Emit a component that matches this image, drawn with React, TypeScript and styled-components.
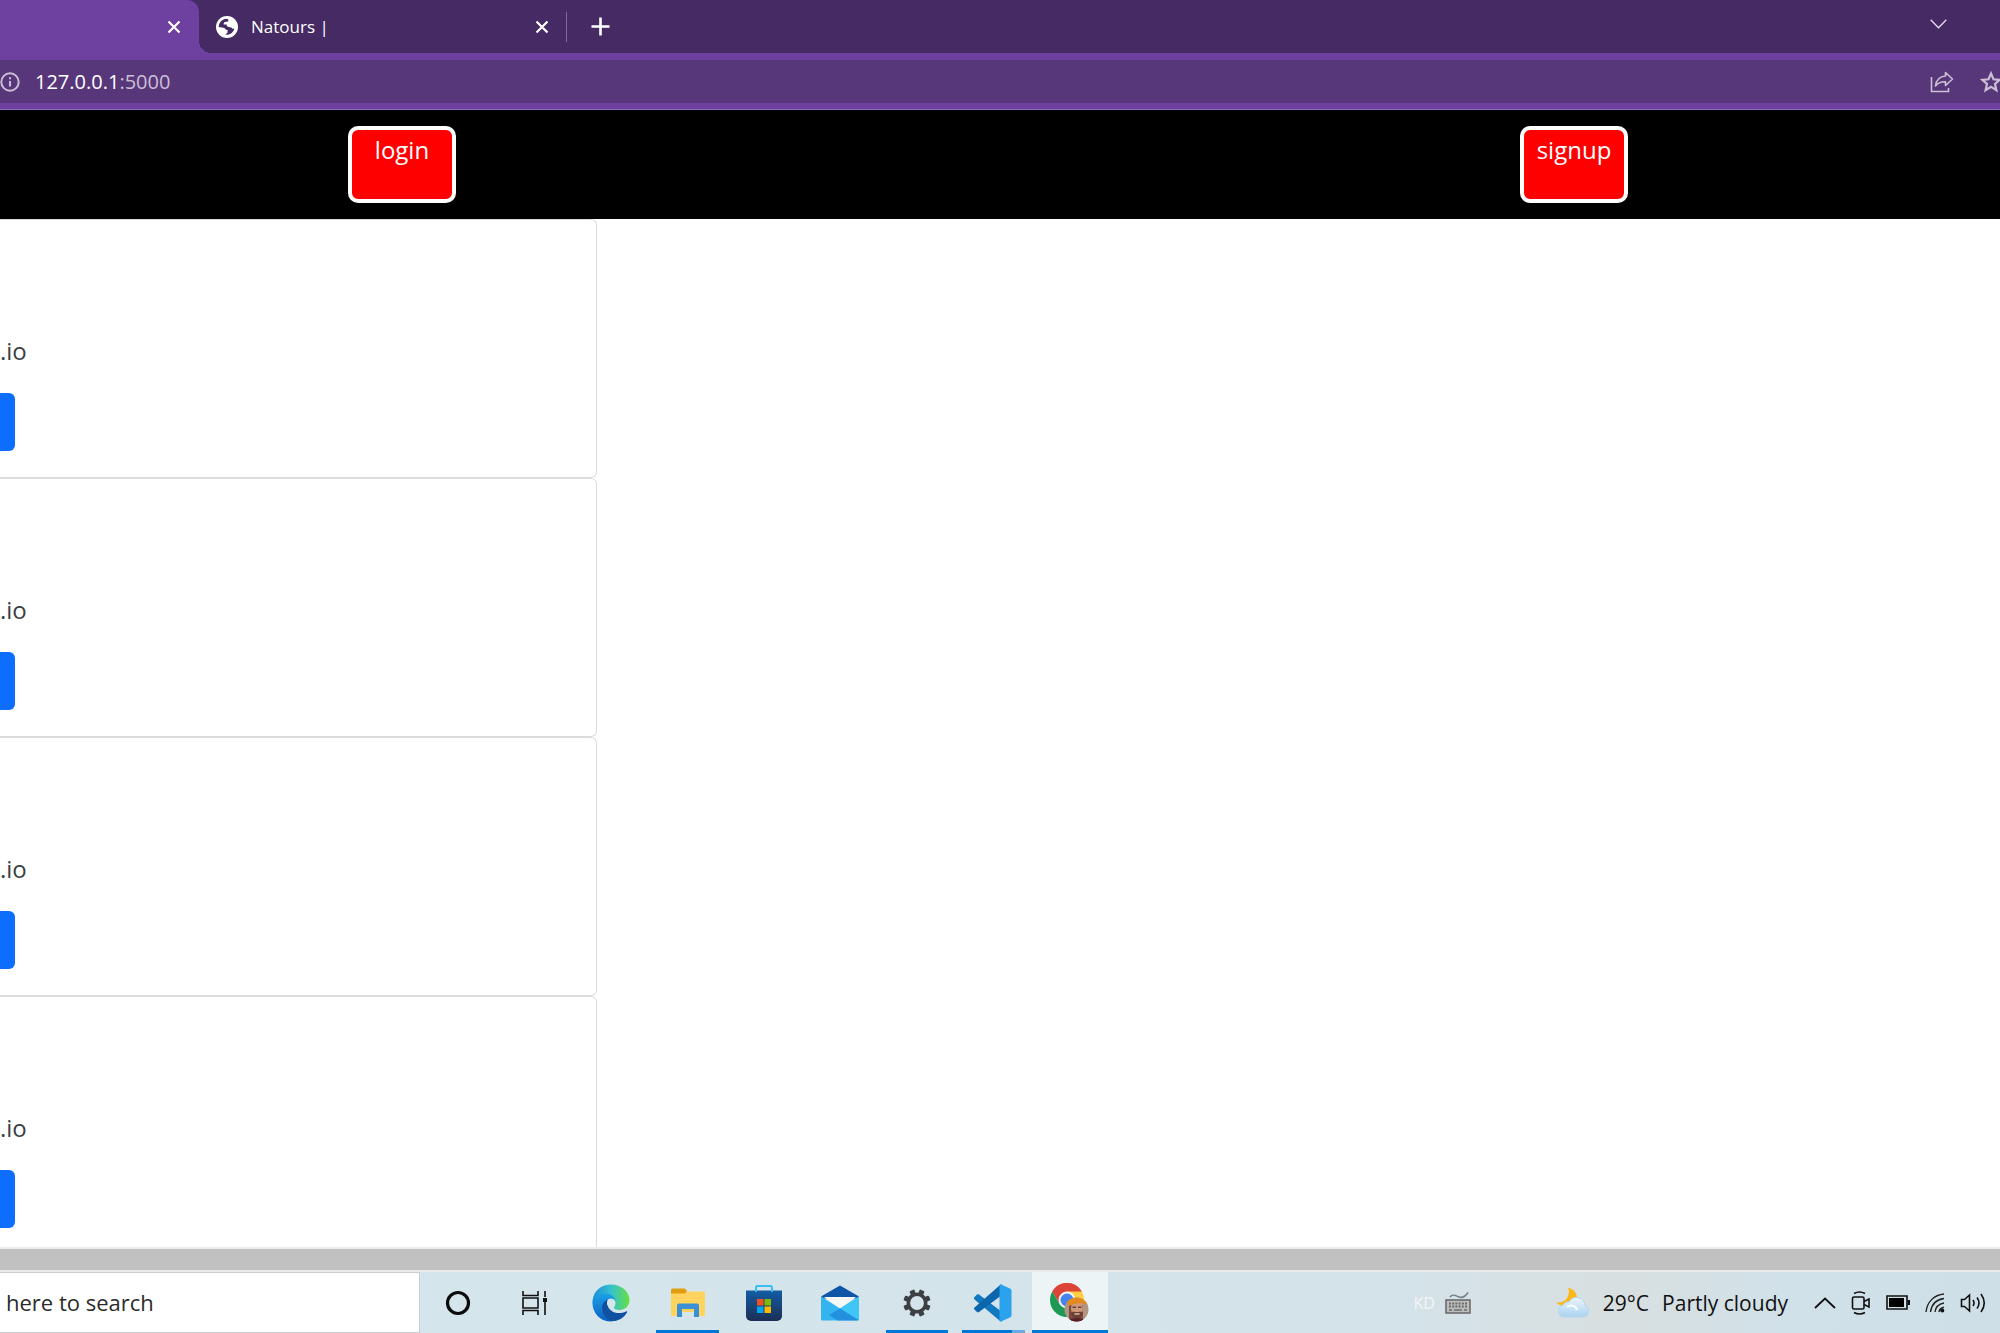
import React from "react";
import styled, { createGlobalStyle, css } from "styled-components";

const GlobalStyle = createGlobalStyle`
  *, *::before, *::after { box-sizing: border-box; }
  body {
    margin: 0;
    background: #fff;
    font-family: "Open Sans", "Noto Sans", sans-serif;
  }
  button, input { font-family: inherit; }
  svg { display: block; flex: none; }
`;

const Screen = styled.div`
  display: flex;
  flex-direction: column;
  height: 100vh;
  overflow: hidden;
`;

const IconButton = styled.button`
  display: flex;
  align-items: center;
  justify-content: center;
  padding: 0;
  border: 0;
  background: none;
  color: inherit;
`;

/* ---------- browser chrome ---------- */

const TabStrip = styled.header`
  display: flex;
  flex: none;
  height: 53px;
  background: #462a64;
  color: #fff;
`;

const Tab = styled.div<{ $active?: boolean }>`
  position: relative;
  display: flex;
  align-items: center;
  justify-content: ${(p) => (p.$active ? "flex-end" : "flex-start")};
  width: ${(p) => (p.$active ? 199 : 368)}px;
  padding: 0 18px 0 17px;
  font-size: 17px;

  ${(p) =>
    p.$active &&
    css`
      background: #6e41a1;
      border-radius: 0 12px 0 0;
      &::after {
        content: "";
        position: absolute;
        left: 100%;
        bottom: 0;
        width: 12px;
        height: 12px;
        background: radial-gradient(circle at 100% 0, transparent 12px, #6e41a1 12px);
      }
    `}
  ${(p) =>
    !p.$active &&
    css`
      &::after {
        content: "";
        position: absolute;
        right: 0;
        top: 12px;
        height: 30px;
        border-right: 1px solid #7f6a95;
      }
    `}
`;

const TabTitle = styled.span`
  flex: 1;
  margin-left: 13px;
`;

const NewTab = styled(IconButton)`
  width: 67px;
`;

const TabMenu = styled(IconButton)`
  width: 50px;
  margin: 0 37px 6px auto;
`;

const Toolbar = styled.div`
  flex: none;
  padding: 7px 0 6px;
  background: #6e41a1;
  border-bottom: 1px solid #8c6bb0;
`;

const AddressBar = styled.div`
  display: flex;
  align-items: center;
  height: 43px;
  background: #57377a;
  color: #cbbfd6;
  overflow: hidden;
`;

const Url = styled.span`
  flex: 1;
  margin-left: 15px;
  font-size: 20px;
  b {
    font-weight: 400;
    color: #fff;
  }
`;

const StarButton = styled(IconButton)`
  margin: 0 -2px 0 26px;
`;

/* ---------- page ---------- */

const NavBar = styled.nav`
  display: flex;
  flex: none;
  justify-content: space-between;
  padding: 16px 18.6% 16px 17.4%;
  background: #000;
`;

const NavButton = styled.button`
  display: flex;
  align-items: flex-start;
  justify-content: center;
  width: 108px;
  height: 77px;
  padding: 4px 0 0;
  border: 4px solid #fff;
  border-radius: 10px;
  background: #f00;
  color: #fff;
  font-size: 24px;
  line-height: 31px;
`;

const Page = styled.main`
  flex: 1;
  min-height: 0;
  overflow: hidden;
  background: #fff;
`;

const Card = styled.article`
  width: 597px;
  height: 259px;
  padding: 115px 0 0;
  border: solid #dcdcdc;
  border-width: 1px 1px 1px 0;
  border-radius: 0 6px 6px 0;
`;

const CardText = styled.p`
  margin: 0 0 26px;
  color: #3a3f44;
  font-size: 24px;
  line-height: 32px;
`;

const CardButton = styled.button`
  display: block;
  width: 15px;
  height: 58px;
  padding: 0;
  border: 0;
  border-radius: 0 6px 6px 0;
  background: #0d6efd;
`;

const ScrollTrack = styled.div`
  flex: none;
  height: 25px;
  border: solid #ececec;
  border-width: 2px 0;
  background: #c1c1c1;
`;

/* ---------- taskbar ---------- */

const Taskbar = styled.footer`
  display: flex;
  flex: none;
  height: 61px;
  background: linear-gradient(90deg, #d5e5ec 21%, #d4e3ea 70%, #d8dfe0 81%, #d1e1e9 89%, #cfdfe8 100%);
`;

const SearchBox = styled.input`
  width: 420px;
  padding: 0 0 1px 6px;
  border: 1px solid #c9ced1;
  border-left: 0;
  background: #fff;
  color: #2b2b2b;
  font-size: 22px;
  outline: 0;
  &::placeholder {
    color: #2b2b2b;
    opacity: 1;
  }
`;

const Apps = styled.div`
  display: flex;
  width: 688px;
`;

const AppButton = styled(IconButton)<{ $open?: boolean; $active?: boolean; $stacked?: boolean }>`
  position: relative;
  flex: 1;
  ${(p) => p.$active && "background: #edf4f6;"}
  ${(p) =>
    (p.$open || p.$active) &&
    css`
      &::after {
        content: "";
        position: absolute;
        left: ${p.$active ? 0 : 7}px;
        right: ${p.$active ? 0 : 7}px;
        bottom: 0;
        height: 3px;
        background: ${p.$stacked ? "linear-gradient(90deg, #0078d7 80%, #69a9e4 80%)" : "#0078d7"};
      }
    `}
`;

const Tray = styled.div`
  display: flex;
  align-items: center;
  margin-left: auto;
  padding-right: 14px;
  color: #111;
`;

const Layout = styled.span`
  margin-right: 10px;
  color: #f4f6f5;
  font-size: 16px;
`;

const Weather = styled.button`
  display: flex;
  align-items: center;
  gap: 13px;
  margin: 0 26px 0 84px;
  padding: 0;
  border: 0;
  background: none;
  color: #111;
  font-size: 21px;
`;

const TrayIcons = styled.div`
  display: flex;
  align-items: center;
  gap: 15px;
`;

/* ---------- icons ---------- */

const CloseIcon = () => (
  <svg width="14" height="14" viewBox="0 0 14 14" fill="none" stroke="#fff" strokeWidth="2.2">
    <path d="M1.5 1.5l11 11M12.5 1.5l-11 11" />
  </svg>
);

const GlobeIcon = () => (
  <svg width="22" height="22" viewBox="0 0 24 24">
    <circle cx="12" cy="12" r="12" fill="#fff" />
    <path
      d="M10.300 3C6 4 3 7.800 3 12l5 .7c1.500.2 2.200 1 2.400 2.100l2.300.4-.3 3.300-2.500 1.800c5.500.8 9-2.500 10.200-6.500-1.500.4-2.600-.1-3.300-1.300l-3.100-.5c-1.700-.3-2.300-1.300-2-2.600H8.300c-.2-2 .7-3 2.600-3.100l2.500-.2V3.500z"
      fill="#462a64"
    />
  </svg>
);

const InfoIcon = () => (
  <svg width="20" height="20" viewBox="0 0 20 20" fill="none" stroke="currentColor" strokeWidth="2">
    <circle cx="10" cy="10" r="8.700" />
    <path d="M10 9v5.500M10 5.300v2" />
  </svg>
);

const ShareIcon = () => (
  <svg width="24" height="22" viewBox="0 0 24 22" fill="none" stroke="currentColor" strokeWidth="1.600">
    <path d="M1.500 6v14.500h17V17" />
    <path d="M15.500 1.500l7 6.500-7 6.500v-3.800c-4.500-.2-7.500 1-10 4.300.6-5.500 4-9.500 10-10z" strokeLinejoin="round" />
  </svg>
);

const StarIcon = () => (
  <svg width="22" height="22" viewBox="0 0 22 22" fill="none" stroke="currentColor" strokeWidth="2.200">
    <path d="M11 2.500l2.500 5.800 6.200.6-4.700 4.100 1.400 6.200-5.400-3.300-5.400 3.300L7 13 2.300 8.900l6.200-.6z" />
  </svg>
);

const TaskViewIcon = () => (
  <svg width="27" height="26" viewBox="0 0 27 26" fill="none" stroke="#111" strokeWidth="1.600">
    <path d="M2 1v4.500h15V1M2 25v-4.500h15V25M2 8h15v10H2zM24 1v6M24 12v13" />
    <path d="M22 8h4v4h-4z" fill="#111" stroke="none" />
  </svg>
);

const EdgeIcon = () => (
  <svg width="38" height="38" viewBox="0 0 38 38">
    <defs>
      <linearGradient id="edgeTop" x1="0" y1=".5" x2="1" y2=".5">
        <stop offset="0" stopColor="#1b8fd6" />
        <stop offset=".5" stopColor="#35c1cf" />
        <stop offset="1" stopColor="#66e03f" />
      </linearGradient>
      <linearGradient id="edgeSide" x1="0" y1="0" x2="0" y2="1">
        <stop offset="0" stopColor="#1ca0e8" />
        <stop offset="1" stopColor="#0a5fc0" />
      </linearGradient>
    </defs>
    <path d="M.5 17C1.500 6 10 .5 19 .5c10 0 18.500 7 18.500 15.500 0 6.500-5 10-10 10-3.500 0-5.500-1.200-5.500-2.300 0-1 1.500-1.800 1.500-4.700 0-3.500-3-6.500-8-6.500S3 14 .5 17z" fill="url(#edgeTop)" />
    <path d="M.5 17c2-5 7-7.500 12-7.500 6 0 10.700 3.500 11 8-1-2.300-2.700-3-4.500-3-3 0-5.500 3-5.500 7.500 0 7 5 13.500 11 14.300C21 37.500 19 37.500 18 37.500 8 37.500-.5 28 .5 17z" fill="url(#edgeSide)" />
    <path d="M15 15.500c-3.500 2-5 5-5 8.500 0 7 6 13.500 13 13 5.500-1 9.500-4.500 12-8.500.5-1-.3-1.500-1-1-8.500 4-18 0-18.500-7.500 0-2 .6-3.500-.5-4.500z" fill="#1050a0" />
    <circle cx="19" cy="19" r="4" fill="#d5e5ec" />
  </svg>
);

const FolderIcon = () => (
  <svg width="34" height="30" viewBox="0 0 34 30">
    <path d="M0 2a1.500 1.500 0 0 1 1.500-1.500H14L16 3l-2 3H0z" fill="#e09d10" />
    <path d="M0 5.500h14l2-2h16.500A1.500 1.500 0 0 1 34 5v21.500a1.500 1.500 0 0 1-1.500 1.500h-31A1.500 1.500 0 0 1 0 26.500z" fill="#ffd35e" />
    <path d="M6 29V17.500a2 2 0 0 1 2-2h18a2 2 0 0 1 2 2V29h-5v-8H11v8z" fill="#3b8fd5" />
    <path d="M11 28v-7h12v7z" fill="#d5e5ec" />
    <path d="M11 24v-3h12v3z" fill="#ffd35e" />
  </svg>
);

const StoreIcon = () => (
  <svg width="36" height="36" viewBox="0 0 36 36">
    <defs>
      <linearGradient id="store" x1="0" y1="0" x2="0" y2="1">
        <stop offset="0" stopColor="#125da4" />
        <stop offset="1" stopColor="#1c2f55" />
      </linearGradient>
    </defs>
    <path d="M0 5.500h36V31a5 5 0 0 1-5 5H5a5 5 0 0 1-5-5z" fill="url(#store)" />
    <path d="M10 7V2.500A1.500 1.500 0 0 1 11.500 1h13A1.500 1.500 0 0 1 26 2.500V7" fill="none" stroke="#36bff2" strokeWidth="2" />
    <path d="M11 14h6.500v6.500H11z" fill="#f25022" />
    <path d="M18.500 14H25v6.500h-6.500z" fill="#7fba00" />
    <path d="M11 21.500h6.500V28H11z" fill="#00a4ef" />
    <path d="M18.500 21.500H25V28h-6.500z" fill="#ffb900" />
  </svg>
);

const MailIcon = () => (
  <svg width="38" height="36" viewBox="0 0 38 36">
    <path d="M0 11.500L19 .5l19 11-3 2H3z" fill="#0f56a8" />
    <path d="M3 12h32l-16 12z" fill="#f7f7f5" />
    <path d="M0 11.500L19 23.500l19-12V34a1.500 1.500 0 0 1-1.500 1.500h-35A1.500 1.500 0 0 1 0 34z" fill="#33b4ee" />
    <path d="M19 23.500l19-12V34a1.500 1.500 0 0 1-.5 1.100z" fill="#40c5f7" />
    <path d="M19 23.500l18.500 11.600c-.4.300-.6.400-1 .4h-20L8 30z" fill="#1d84d8" opacity=".75" />
  </svg>
);

const GearIcon = () => (
  <svg width="28" height="28" viewBox="-14 -14 28 28">
    {Array.from({ length: 8 }, (_, i) => (
      <rect key={i} x="-2.600" y="-13.700" width="5.200" height="6" rx="1" fill="#3c4043" transform={`rotate(${22.5 + i * 45})`} />
    ))}
    <circle r="8.700" fill="none" stroke="#3c4043" strokeWidth="3.600" />
  </svg>
);

const CodeIcon = () => (
  <svg width="38" height="38" viewBox="0 0 38 38">
    <path d="M0 13.500l3-3c.6-.5 1.400-.5 2 0L28 28v9.500c-1 0-1.800-.4-2.500-1L.5 15.500c-.7-.6-.8-1.400-.5-2z" fill="#1079c0" />
    <path d="M0 25l3 3c.6.500 1.400.5 2 0L28 11V.5c-1 0-1.800.4-2.500 1L.5 23.500c-.7.600-.8 1-.5 1.500z" fill="#0b66ab" />
    <path d="M27 .6L36 4.500c1 .5 1.500 1.200 1.500 2.200v24.600c0 1-.5 1.800-1.500 2.200l-9 4c-.7.300-1.500 0-1.500-1.200V1.500c0-1 .8-1.200 1.500-.9z" fill="#2aa2ee" />
  </svg>
);

const ChromeIcon = () => (
  <svg width="39" height="39" viewBox="0 0 39 39">
    <path d="M17 17L2.300 8.500A17 17 0 0 1 31.700 8.500z" fill="#db4437" />
    <path d="M17 8.500L17 17 9.600 21.200 2.300 8.500A17 17 0 0 1 31.700 8.500z" fill="#db4437" />
    <path d="M9.600 21.200L2.300 8.500A17 17 0 0 0 17 34l7.400-12.800z" fill="#1c9a55" />
    <path d="M17 8.500h14.700A17 17 0 0 1 17 34l7.400-12.800z" fill="#ffcd40" />
    <circle cx="17" cy="17" r="8.500" fill="#f4f4f4" />
    <circle cx="17" cy="17" r="6.500" fill="#4384ee" />
    <clipPath id="face">
      <circle cx="26.500" cy="26.500" r="12" />
    </clipPath>
    <g clipPath="url(#face)">
      <path d="M14 14h25v25H14z" fill="#b29482" />
      <path d="M19 22h14v17H19z" fill="#7a4a3c" />
      <ellipse cx="27" cy="25.500" rx="6" ry="8.500" fill="#cf987a" />
      <path d="M21.200 29c2-.5 3 0 5.800 0s4-.5 5.800 0c0 4.500-2.500 6.500-5.800 6.500S21.200 33.500 21.200 29z" fill="#6b4035" />
      <path d="M24.500 30.200h5v1.600h-5z" fill="#e4b8a5" />
      <path d="M22.500 23.500h3.500v1.500h-3.500zM28 23.500h3.500v1.500H28z" fill="#65403a" />
      <path d="M15 14h24v8c-6-2.500-14-2.500-20 1z" fill="#e58a1f" />
      <path d="M18 38c4-4 14-4 18 0v2H18z" fill="#5b2028" />
    </g>
  </svg>
);

const KeyboardIcon = () => (
  <svg width="26" height="22" viewBox="0 0 26 22" fill="none">
    <path d="M5 5c3-4 6-1 9 0s6 0 9-4.500" stroke="#777f84" strokeWidth="1.600" />
    <rect x="1" y="8" width="24" height="13" fill="#bcbdbd" stroke="#6c6c6c" strokeWidth="1.600" />
    <path d="M4 11.500h18M4 14.500h18" stroke="#6b6b6b" strokeWidth="1.800" strokeDasharray="2 1.200" />
    <path d="M4 18h3M9 18h8M19 18h3" stroke="#6b6b6b" strokeWidth="1.600" />
  </svg>
);

const WeatherIcon = () => (
  <svg width="35" height="31" viewBox="0 0 35 31">
    <defs>
      <linearGradient id="cloud" x1="0" y1="0" x2="0" y2="1">
        <stop offset="0" stopColor="#eaf5fd" />
        <stop offset="1" stopColor="#a9d2f0" />
      </linearGradient>
    </defs>
    <path d="M13 .5c7 2 10.500 7.500 8 13.500S8 21.500 1 15.500c5 .5 9-1 11-4.500s2.500-6.500 1-10.500z" fill="#fbb917" />
    <path d="M9 30a6 6 0 0 1-1-11.800A6 6 0 0 1 14 15a8.500 8.500 0 0 1 16 3.500A6 6 0 0 1 28.500 30z" fill="url(#cloud)" stroke="#b5d6ec" />
    <path d="M12 20c4-3 9-1 10 3" fill="none" stroke="#fff" strokeWidth="2" />
  </svg>
);

const ChevronUp = () => (
  <svg width="22" height="12" viewBox="0 0 22 12" fill="none" stroke="#111" strokeWidth="1.800">
    <path d="M1 11L11 1.500 21 11" />
  </svg>
);

const ChevronDown = () => (
  <svg width="17" height="10" viewBox="0 0 17 10" fill="none" stroke="#e4dde9" strokeWidth="1.300">
    <path d="M.7.7l7.800 8 7.800-8" />
  </svg>
);

const MeetIcon = () => (
  <svg width="20" height="24" viewBox="0 0 20 24" fill="none" stroke="#111" strokeWidth="1.600">
    <rect x="1.500" y="6" width="11.500" height="12" rx="1.500" />
    <path d="M13 10.500l5-2.500v8l-5-2.500M3 2.500Q8.500-.5 14 2.500M3 21.500q5.500 3 11 0" />
  </svg>
);

const BatteryIcon = () => (
  <svg width="24" height="15" viewBox="0 0 24 15">
    <path d="M1 1h20v13H1z" fill="none" stroke="#111" strokeWidth="1.600" />
    <path d="M3 3h15v9H3z" />
    <path d="M21.500 5H24v5h-2.500z" fill="#111" />
  </svg>
);

const WifiIcon = () => (
  <svg width="20" height="20" viewBox="0 0 20 20" fill="none" stroke="#222" strokeWidth="1.400">
    <path d="M1 19C2 9 9 2 19 1M5.500 19C6.500 11.500 11.500 6.500 19 5.500M10 19c.5-4.500 4-8 9-9" />
    <path d="M14 19c.3-2.500 2-4.300 5-4.800" />
    <circle cx="17.300" cy="17.500" r="2" fill="#111" stroke="none" />
  </svg>
);

const VolumeIcon = () => (
  <svg width="26" height="22" viewBox="0 0 26 22" fill="none" stroke="#111" strokeWidth="1.600">
    <path d="M1.500 7.500h3L9.500 3v16l-5-4.500h-3z" />
    <path d="M13 8q2 3 0 6M17 5.500q4 5.500 0 11M21 2q6.500 9 0 18" />
  </svg>
);

const CortanaIcon = () => (
  <svg width="26" height="26" viewBox="0 0 26 26">
    <circle cx="13" cy="13" r="10.500" fill="none" stroke="#0b0b0b" strokeWidth="3.200" />
  </svg>
);

const PlusIcon = () => (
  <svg width="19" height="19" viewBox="0 0 19 19" stroke="#fff" strokeWidth="2.600">
    <path d="M9.500 .5v18M.5 9.500h18" />
  </svg>
);

const cards = [1, 2, 3, 4];

export default function App() {
  return (
    <Screen>
      <GlobalStyle />
      <TabStrip>
        <Tab $active>
          <IconButton aria-label="Close tab"><CloseIcon /></IconButton>
        </Tab>
        <Tab>
          <GlobeIcon />
          <TabTitle>Natours |</TabTitle>
          <IconButton aria-label="Close tab"><CloseIcon /></IconButton>
        </Tab>
        <NewTab aria-label="New tab"><PlusIcon /></NewTab>
        <TabMenu aria-label="Search tabs"><ChevronDown /></TabMenu>
      </TabStrip>
      <Toolbar>
        <AddressBar>
          <IconButton aria-label="Site information"><InfoIcon /></IconButton>
          <Url><b>127.0.0.1</b>:5000</Url>
          <IconButton aria-label="Share"><ShareIcon /></IconButton>
          <StarButton aria-label="Bookmark"><StarIcon /></StarButton>
        </AddressBar>
      </Toolbar>

      <NavBar>
        <NavButton>login</NavButton>
        <NavButton>signup</NavButton>
      </NavBar>
      <Page>
        {cards.map((id) => (
          <Card key={id}>
            <CardText>.io</CardText>
            <CardButton aria-label="Open" />
          </Card>
        ))}
      </Page>
      <ScrollTrack />

      <Taskbar>
        <SearchBox type="text" aria-label="Search" placeholder="here to search" />
        <Apps>
          <AppButton aria-label="Cortana"><CortanaIcon /></AppButton>
          <AppButton aria-label="Task view"><TaskViewIcon /></AppButton>
          <AppButton aria-label="Edge"><EdgeIcon /></AppButton>
          <AppButton aria-label="File Explorer" $open><FolderIcon /></AppButton>
          <AppButton aria-label="Store"><StoreIcon /></AppButton>
          <AppButton aria-label="Mail"><MailIcon /></AppButton>
          <AppButton aria-label="Settings" $open><GearIcon /></AppButton>
          <AppButton aria-label="Code" $open $stacked><CodeIcon /></AppButton>
          <AppButton aria-label="Chrome" $active><ChromeIcon /></AppButton>
        </Apps>
        <Tray>
          <Layout>KD</Layout>
          <KeyboardIcon />
          <Weather>
            <WeatherIcon />
            <span>29°C</span>
            <span>Partly cloudy</span>
          </Weather>
          <TrayIcons>
            <ChevronUp />
            <MeetIcon />
            <BatteryIcon />
            <WifiIcon />
            <VolumeIcon />
          </TrayIcons>
        </Tray>
      </Taskbar>
    </Screen>
  );
}
